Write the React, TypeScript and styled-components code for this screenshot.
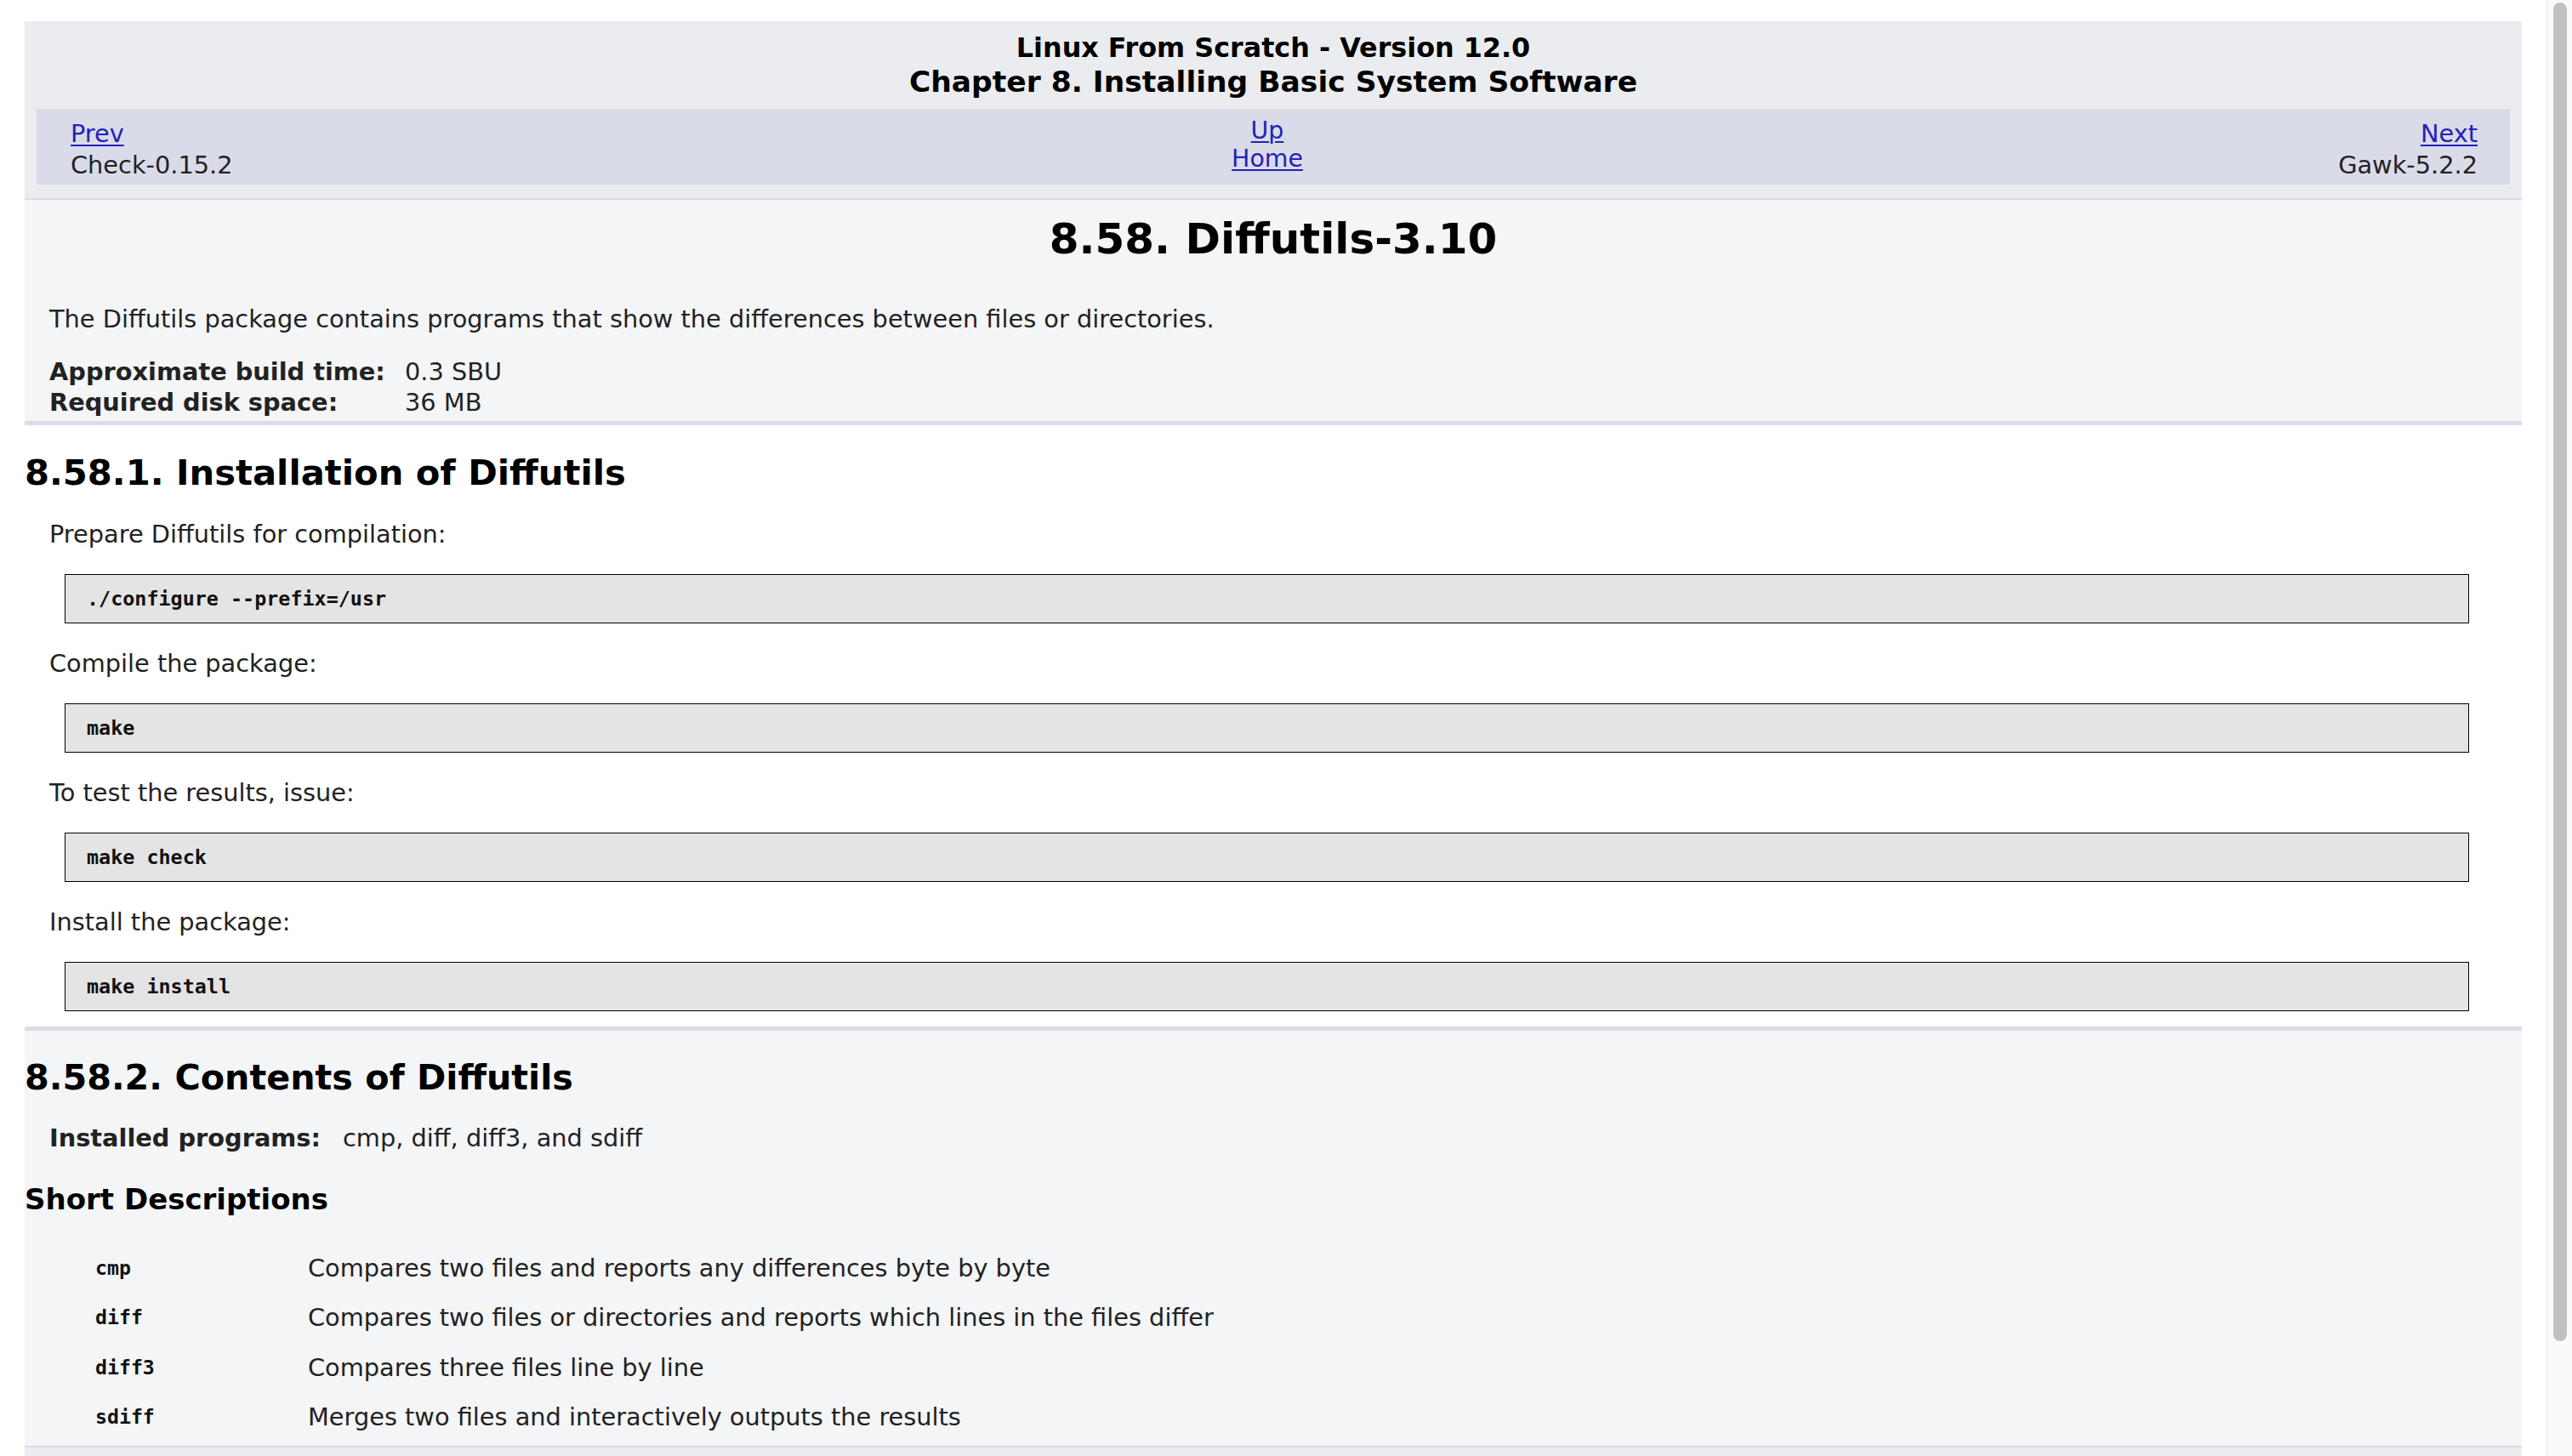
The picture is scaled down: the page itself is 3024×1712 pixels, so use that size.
import React from "react";
import styled, { createGlobalStyle } from "styled-components";

const Global = createGlobalStyle`
  html, body { margin: 0; padding: 0; background: #ffffff; overflow: hidden; }
  body { font-family: "DejaVu Sans", Verdana, sans-serif; color: #222; }
  * { box-sizing: border-box; }
`;

const Shell = styled.div`
  display: flex;
  flex-direction: row;
  height: 100vh;
  width: 100vw;
  overflow: hidden;
`;

const Main = styled.div`
  flex: 1;
  min-width: 0;
  padding: 25px 29px 0 29px;
  display: flex;
  flex-direction: column;
`;

const ScrollTrack = styled.div`
  width: 30px;
  flex: none;
  background: #fafafa;
  border-left: 1px solid #e6e6e6;
  padding: 3px 6px 0 7px;
`;

const ScrollThumb = styled.div`
  width: 16px;
  height: 1574px;
  background: #c1c1c1;
  border-radius: 8px;
`;

const Header = styled.div`
  background: #ebecef;
  padding: 10px 14px 16px 14px;
  border-bottom: 2px solid #dadbe8;
`;

const HeadTitle = styled.div<{ $size: number }>`
  text-align: center;
  font-weight: bold;
  color: #000;
  font-size: ${(p) => p.$size}px;
  line-height: 41px;
`;

const NavBar = styled.div`
  margin-top: 11px;
  background: #dadbe8;
  padding: 9px 38px 4px 40px;
  display: grid;
  grid-template-columns: 1fr auto 1fr;
  align-items: start;
`;

const NavCell = styled.div<{ $align: "left" | "center" | "right"; $small?: boolean }>`
  text-align: ${(p) => p.$align};
  font-size: ${(p) => (p.$small ? 28.4 : 28.8)}px;
  line-height: ${(p) => (p.$small ? 33 : 37)}px;
  color: #222;
  display: flex;
  flex-direction: column;
  margin-top: ${(p) => (p.$small ? 0 : 2)}px;
  margin-right: ${(p) => (p.$align === "center" ? 16 : 0)}px;
  align-items: ${(p) =>
    p.$align === "left" ? "flex-start" : p.$align === "right" ? "flex-end" : "center"};
`;

const Link = styled.a`
  color: #2222bb;
  text-decoration: underline;
  text-underline-offset: 3px;
  text-decoration-thickness: 2px;
`;

const Package = styled.section`
  background: #f4f5f7;
  padding: 16px 29px 4px 29px;
  border-bottom: 5px solid #dadbe8;
`;

const Title = styled.h1`
  margin: 0;
  text-align: center;
  font-size: 50px;
  line-height: 60px;
  font-weight: bold;
  color: #000;
`;

const Para = styled.p<{ $top?: number; $bottom?: number }>`
  margin: ${(p) => p.$top ?? 0}px 0 ${(p) => p.$bottom ?? 0}px 0;
  font-size: 28.8px;
  line-height: 36px;
  color: #222;
`;

const InfoGrid = styled.div<{ $label: number; $top: number }>`
  display: grid;
  grid-template-columns: ${(p) => p.$label}px 1fr;
  margin-top: ${(p) => p.$top}px;
  font-size: 28.8px;
  line-height: 36px;
  color: #222;
`;

const Label = styled.span`
  font-weight: bold;
  color: #222;
`;

const Value = styled.span``;

const Installation = styled.section`
  background: #ffffff;
  padding: 30px 0 18px 0;
`;

const SectionTitle = styled.h2<{ $size: number }>`
  margin: 0;
  font-size: ${(p) => p.$size}px;
  line-height: 52px;
  font-weight: bold;
  color: #000;
`;

const Indented = styled.div`
  padding-left: 29px;
`;

const Code = styled.pre`
  margin: 0 62px 0 47px;
  background: #e4e4e4;
  border: 1px solid #000;
  padding: 15px 25px 14px 25px;
  font-family: "DejaVu Sans Mono", "Liberation Mono", monospace;
  font-weight: bold;
  font-size: 23.4px;
  line-height: 27px;
  color: #111;
`;

const Contents = styled.section`
  background: #f4f5f7;
  border-top: 5px solid #dadbe8;
  border-bottom: 2px solid #dadbe8;
  padding: 29px 0 16px 0;
`;

const SubTitle = styled.h3`
  margin: 32px 0 0 0;
  font-size: 34px;
  line-height: 44px;
  font-weight: bold;
  color: #000;
`;

const DescList = styled.div`
  margin-top: 41px;
  display: grid;
  grid-template-columns: 250px 1fr;
  row-gap: 22.4px;
  padding-left: 83px;
`;

const Term = styled.code`
  font-family: "DejaVu Sans Mono", "Liberation Mono", monospace;
  font-weight: bold;
  font-size: 23.2px;
  line-height: 36px;
  color: #111;
`;

const Def = styled.span`
  font-size: 28.8px;
  line-height: 36px;
  color: #222;
`;

const Footer = styled.div`
  background: #ebecef;
  flex: 1;
`;

const steps: { text: string; code: string }[] = [
  { text: "Prepare Diffutils for compilation:", code: "./configure --prefix=/usr" },
  { text: "Compile the package:", code: "make" },
  { text: "To test the results, issue:", code: "make check" },
  { text: "Install the package:", code: "make install" },
];

const descs: [string, string][] = [
  ["cmp", "Compares two files and reports any differences byte by byte"],
  ["diff", "Compares two files or directories and reports which lines in the files differ"],
  ["diff3", "Compares three files line by line"],
  ["sdiff", "Merges two files and interactively outputs the results"],
];

export default function App() {
  return (
    <>
      <Global />
      <Shell>
        <Main>
          <Header>
            <HeadTitle $size={31.8}>Linux From Scratch - Version 12.0</HeadTitle>
            <HeadTitle $size={34.5}>Chapter 8. Installing Basic System Software</HeadTitle>
            <NavBar>
              <NavCell $align="left">
                <Link href="#prev">Prev</Link>
                <span>Check-0.15.2</span>
              </NavCell>
              <NavCell $align="center" $small>
                <Link href="#up">Up</Link>
                <Link href="#home">Home</Link>
              </NavCell>
              <NavCell $align="right">
                <Link href="#next">Next</Link>
                <span>Gawk-5.2.2</span>
              </NavCell>
            </NavBar>
          </Header>

          <Package>
            <Title>8.58. Diffutils-3.10</Title>
            <Para $top={46}>
              The Diffutils package contains programs that show the differences between files or
              directories.
            </Para>
            <InfoGrid $label={418} $top={26}>
              <Label>Approximate build time:</Label>
              <Value>0.3 SBU</Value>
              <Label>Required disk space:</Label>
              <Value>36 MB</Value>
            </InfoGrid>
          </Package>

          <Installation>
            <SectionTitle $size={41.7}>8.58.1. Installation of Diffutils</SectionTitle>
            {steps.map((s, i) => (
              <React.Fragment key={s.code}>
                <Indented>
                  <Para $top={i === 0 ? 28 : 29} $bottom={29}>
                    {s.text}
                  </Para>
                </Indented>
                <Code>{s.code}</Code>
              </React.Fragment>
            ))}
          </Installation>

          <Contents>
            <SectionTitle $size={41.3}>8.58.2. Contents of Diffutils</SectionTitle>
            <Indented>
              <InfoGrid $label={345} $top={27}>
                <Label>Installed programs:</Label>
                <Value>cmp, diff, diff3, and sdiff</Value>
              </InfoGrid>
            </Indented>
            <SubTitle>Short Descriptions</SubTitle>
            <DescList>
              {descs.map(([t, d]) => (
                <React.Fragment key={t}>
                  <Term>{t}</Term>
                  <Def>{d}</Def>
                </React.Fragment>
              ))}
            </DescList>
          </Contents>
          <Footer />
        </Main>
        <ScrollTrack>
          <ScrollThumb />
        </ScrollTrack>
      </Shell>
    </>
  );
}
